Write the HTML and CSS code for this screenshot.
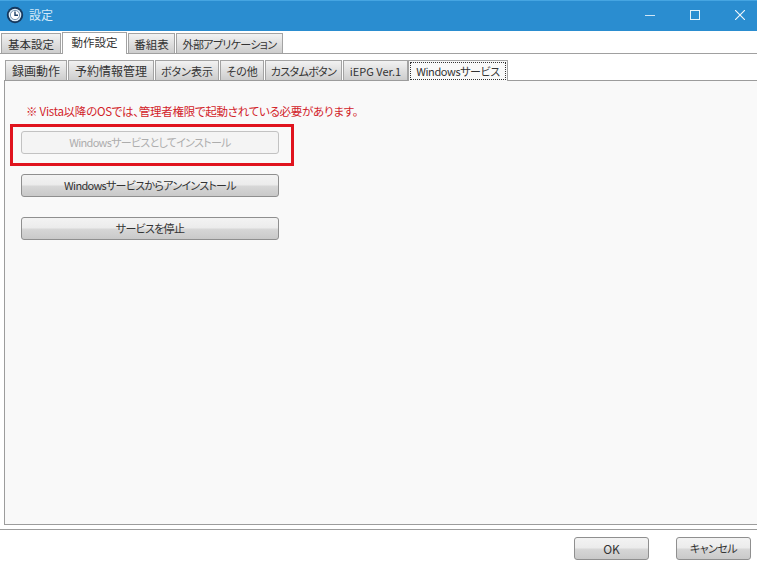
FILE: index.html
```html
<!DOCTYPE html>
<html lang="ja">
<head>
<meta charset="utf-8">
<title>設定</title>
<link rel="stylesheet" href="styles.css">
</head>
<body>
<div class="window">
  <header class="titlebar">
    <svg class="app-icon" width="18" height="18" viewBox="0 0 18 18">
      <circle cx="9" cy="9" r="8.2" fill="#16395f"/>
      <circle cx="9" cy="9" r="6.3" fill="#dcebf6"/>
      <circle cx="9" cy="9" r="4.6" fill="#fff" stroke="#5c7f9f" stroke-width=".8"/>
      <path d="M9 5.6V9.3H12" fill="none" stroke="#1c3f66" stroke-width="1.4"/>
    </svg>
    <span class="title">設定</span>
    <div class="controls">
      <svg class="ctl" width="10" height="10" viewBox="0 0 10 10"><path d="M0 5.5H10" stroke="#cfe6f6" stroke-width="1"/></svg>
      <svg class="ctl" width="10" height="10" viewBox="0 0 10 10"><rect x=".5" y=".5" width="9" height="9" fill="none" stroke="#e4f1fa" stroke-width="1"/></svg>
      <svg class="ctl" width="10" height="10" viewBox="0 0 10 10"><path d="M0 0L10 10M10 0L0 10" stroke="#f2f8fc" stroke-width="1.1"/></svg>
    </div>
  </header>

  <nav class="tabs outer">
    <span class="tab kanji w-kihon">基本設定</span>
    <span class="tab kanji active w-dosa">動作設定</span>
    <span class="tab kanji w-bangumi">番組表</span>
    <span class="tab kana w-gaibu">外部アプリケーション</span>
  </nav>

  <main class="body">
    <nav class="tabs inner">
      <span class="tab w-rokuga">録画動作</span>
      <span class="tab w-yoyaku">予約情報管理</span>
      <span class="tab mixed w-button">ボタン表示</span>
      <span class="tab mixed w-other">その他</span>
      <span class="tab kana w-custom">カスタムボタン</span>
      <span class="tab mixed w-iepg">iEPG Ver.1</span>
      <span class="tab active w-service"><span class="focus">Windowsサービス</span></span>
    </nav>
    <section class="panel">
      <p class="notice">※ Vista以降のOSでは、管理者権限で起動されている必要があります。</p>
      <div class="actions">
        <button class="btn wide" disabled>Windowsサービスとしてインストール</button>
        <button class="btn wide">Windowsサービスからアンインストール</button>
        <button class="btn wide">サービスを停止</button>
      </div>
      <div class="highlight"></div>
    </section>
  </main>

  <footer class="footer">
    <button class="btn small latin">OK</button>
    <button class="btn small">キャンセル</button>
  </footer>
</div>
</body>
</html>
```
FILE: styles.css
```css
* { box-sizing: border-box; }
html, body { margin: 0; padding: 0; }
body {
  width: 757px;
  height: 570px;
  overflow: hidden;
  background: #fff;
  font-family: "Noto Sans CJK JP", "Noto Sans", sans-serif;
  font-size: 12px;
  font-feature-settings: "palt";
  color: #333;
}
.window { display: flex; flex-direction: column; height: 570px; }

.titlebar {
  height: 31px;
  flex: none;
  display: flex;
  align-items: center;
  padding: 0 0 2px 6px;
  background: #2a8dd0;
  border-top: 1px solid #45a5e2;
  color: #d5eaf8;
}
.app-icon { flex: none; }
.title { margin-left: 5px; font-size: 12px; line-height: 16px; }
.controls { margin-left: auto; display: flex; gap: 35px; padding-right: 12px; }
.ctl { display: block; }

.tabs { display: flex; align-items: flex-end; flex: none; }
.tab {
  height: 20px;
  margin-right: 1px;
  padding-bottom: 0;
  display: flex;
  align-items: center;
  justify-content: center;
  border: 1px solid #a3a3a3;
  border-bottom: 0;
  background: linear-gradient(#f2f2f2, #cdcdcd);
  white-space: nowrap;
  font-size: 12px;
}
.tab.kanji { font-size: 11.5px; }
.tab.mixed { font-size: 11px; }
.tab.kana { font-size: 11px; letter-spacing: -.65px; }
.tab.active { background: #fff; }
.outer { height: 23px; padding-left: 1px; border-bottom: 1px solid #a0a0a0; background: #fff; }
.outer .tab.active { height: 22px; margin-bottom: -1px; padding-bottom: 3px; position: relative; }
.w-kihon { width: 60px; }
.w-dosa { width: 65px; }
.w-bangumi { width: 47px; }
.w-gaibu { width: 107px; }

.body {
  flex: 1;
  display: flex;
  flex-direction: column;
  padding: 6px 0 0 4px;
  background: #fff;
}
.inner { height: 21px; padding-left: 1px; border-bottom: 1px solid #9c9c9c; }
.inner .tab.active {
  height: 21px;
  margin-bottom: -1px;
  padding: 1px;
  background: #f9f9f9;
  font-size: 11px;
  letter-spacing: -.4px;
  position: relative;
}
.w-rokuga { width: 62px; }
.w-yoyaku { width: 86px; }
.w-button { width: 64px; }
.w-other { width: 44px; }
.w-custom { width: 77px; }
.w-iepg { width: 65px; margin-right: 0; }
.w-service { width: 100px; }
.focus {
  flex: 1;
  align-self: stretch;
  display: flex;
  align-items: center;
  justify-content: center;
  border: 1px dotted #333;
}

.panel {
  position: relative;
  height: 444px;
  padding: 21px 16px 0;
  background: #f9f9f9;
  border-left: 1px solid #9c9c9c;
  border-bottom: 1px solid #9c9c9c;
}
.notice {
  margin: 0 0 0 5px;
  height: 18px;
  line-height: 18px;
  color: #d2232a;
  font-size: 11.5px;
  letter-spacing: -.27px;
  white-space: nowrap;
}
.actions { margin-top: 11px; display: flex; flex-direction: column; gap: 20px; align-items: flex-start; }

.btn {
  display: block;
  padding: 0;
  height: 23px;
  border: 1px solid #8f8f8f;
  border-radius: 3px;
  background: linear-gradient(#f3f3f3, #ececec 45%, #d6d6d6 55%, #c9c9c9);
  color: #333;
  font-family: inherit;
  font-feature-settings: inherit;
  font-size: 11px;
  letter-spacing: -.7px;
  line-height: 1;
}
.btn[disabled] { background: #f4f4f4; border-color: #c2c2c2; color: #adadad; }
.btn.latin { font-size: 12px; letter-spacing: 0; }
.wide { width: 258px; }
.small { width: 75px; letter-spacing: -.5px; }

.highlight {
  position: absolute;
  left: 5px;
  top: 43px;
  width: 284px;
  height: 42px;
  border: 3px solid #e0141e;
}

.footer {
  height: 41px;
  flex: none;
  display: flex;
  justify-content: flex-end;
  gap: 27px;
  padding: 7px 6px 0 0;
  border-top: 1px solid #9c9c9c;
  background: #fff;
}
```
